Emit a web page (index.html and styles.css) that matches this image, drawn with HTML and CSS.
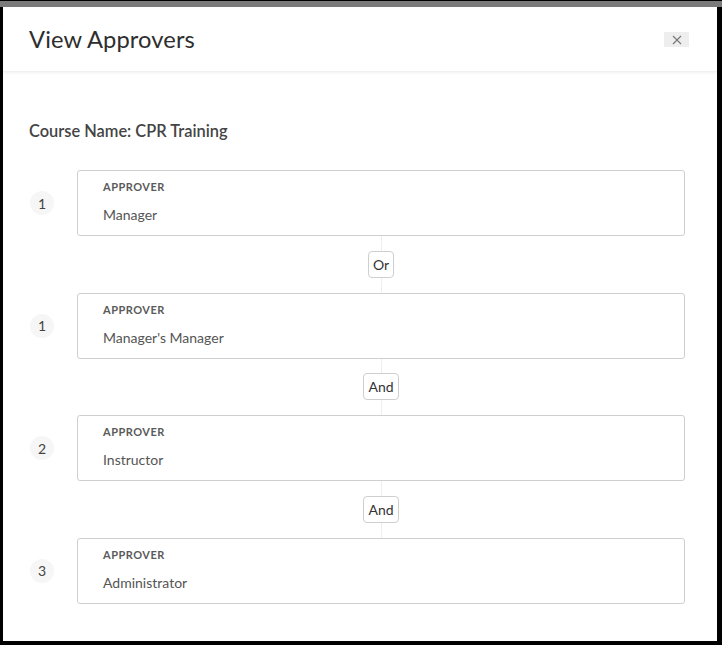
FILE: index.html
```html
<!DOCTYPE html>
<html>
<head>
<meta charset="utf-8">
<link rel="stylesheet" href="styles.css">
</head>
<body>
<div class="frame">
  <div class="topbar"></div>
  <div class="modal">
    <header class="modal-header">
      <h1 class="title">View Approvers</h1>
      <button class="close" aria-label="Close">
        <svg width="10" height="10" viewBox="0 0 10 10"><path d="M1 1L9 9M9 1L1 9" stroke="#777" stroke-width="1.1" fill="none"/></svg>
      </button>
    </header>
    <div class="modal-body">
      <div class="course">Course Name: CPR Training</div>
      <div class="flow">
        <div class="row">
          <div class="num">1</div>
          <div class="card"><div class="label">APPROVER</div><div class="value">Manager</div></div>
        </div>
        <div class="link"><span class="badge">Or</span></div>
        <div class="row">
          <div class="num">1</div>
          <div class="card"><div class="label">APPROVER</div><div class="value">Manager's Manager</div></div>
        </div>
        <div class="link"><span class="badge">And</span></div>
        <div class="row">
          <div class="num">2</div>
          <div class="card"><div class="label">APPROVER</div><div class="value">Instructor</div></div>
        </div>
        <div class="link"><span class="badge">And</span></div>
        <div class="row">
          <div class="num">3</div>
          <div class="card"><div class="label">APPROVER</div><div class="value">Administrator</div></div>
        </div>
      </div>
    </div>
  </div>
</div>
</body>
</html>
```
FILE: styles.css
```css
* { box-sizing: border-box; }
html, body { margin: 0; padding: 0; }
body {
  width: 722px;
  height: 645px;
  background: #000;
  font-family: "Lato", "Liberation Sans", sans-serif;
  color: #444;
}
.frame {
  width: 722px;
  height: 645px;
  border-top: 1px solid #000;
  border-left: 3px solid #000;
  border-right: 5px solid #000;
  border-bottom: 4px solid #000;
  background: #fff;
  display: flex;
  flex-direction: column;
}
.topbar {
  height: 6px;
  background: #7a7a7a;
  margin-left: -3px;
  margin-right: -5px;
}
.modal { flex: 1; display: flex; flex-direction: column; }
.modal-header {
  height: 65px;
  padding: 0 28px 0 26px;
  display: flex;
  align-items: center;
  justify-content: space-between;
  box-shadow: 0 1px 3px rgba(0,0,0,0.06);
  border-bottom: 1px solid #f0f0f0;
}
.title {
  margin: 0;
  font-size: 23.7px;
  font-weight: 400;
  color: #2e2e2e;
  letter-spacing: 0.1px;
}
.close {
  width: 25px;
  height: 15px;
  border: 0;
  padding: 0;
  background: #eeeeee;
  display: flex;
  align-items: center;
  justify-content: center;
  margin-top: 1px;
}
.modal-body { padding: 49px 32px 0 26px; }
.course {
  font-size: 16.4px;
  font-weight: 600;
  color: #444;
  line-height: 20px;
}
.flow { margin-top: 29px; }
.row {
  display: flex;
  align-items: center;
}
.num {
  width: 24px;
  height: 24px;
  margin-left: 1px;
  margin-right: 23px;
  border-radius: 50%;
  background: #f6f6f6;
  font-size: 14px;
  color: #444;
  display: flex;
  align-items: center;
  justify-content: center;
}
.card {
  flex: 1;
  height: 66px;
  border: 1px solid #cfcfcf;
  border-radius: 3px;
  padding: 9px 25px 0;
}
.label {
  font-size: 11px;
  font-weight: 700;
  letter-spacing: 0.5px;
  color: #5a5a5a;
  line-height: 14px;
}
.value {
  margin-top: 13px;
  font-size: 14px;
  color: #555;
  line-height: 16px;
}
.link {
  height: 56.6px;
  margin-left: 48px;
  display: flex;
  align-items: center;
  justify-content: center;
  background: linear-gradient(#eeeeee, #eeeeee) no-repeat center / 1px 100%;
}
.badge {
  height: 27px;
  padding: 0 4px;
  min-width: 25px;
  border: 1px solid #cfcfcf;
  border-radius: 4px;
  background: #fff;
  font-size: 14px;
  color: #333;
  display: flex;
  align-items: center;
  justify-content: center;
}
```
